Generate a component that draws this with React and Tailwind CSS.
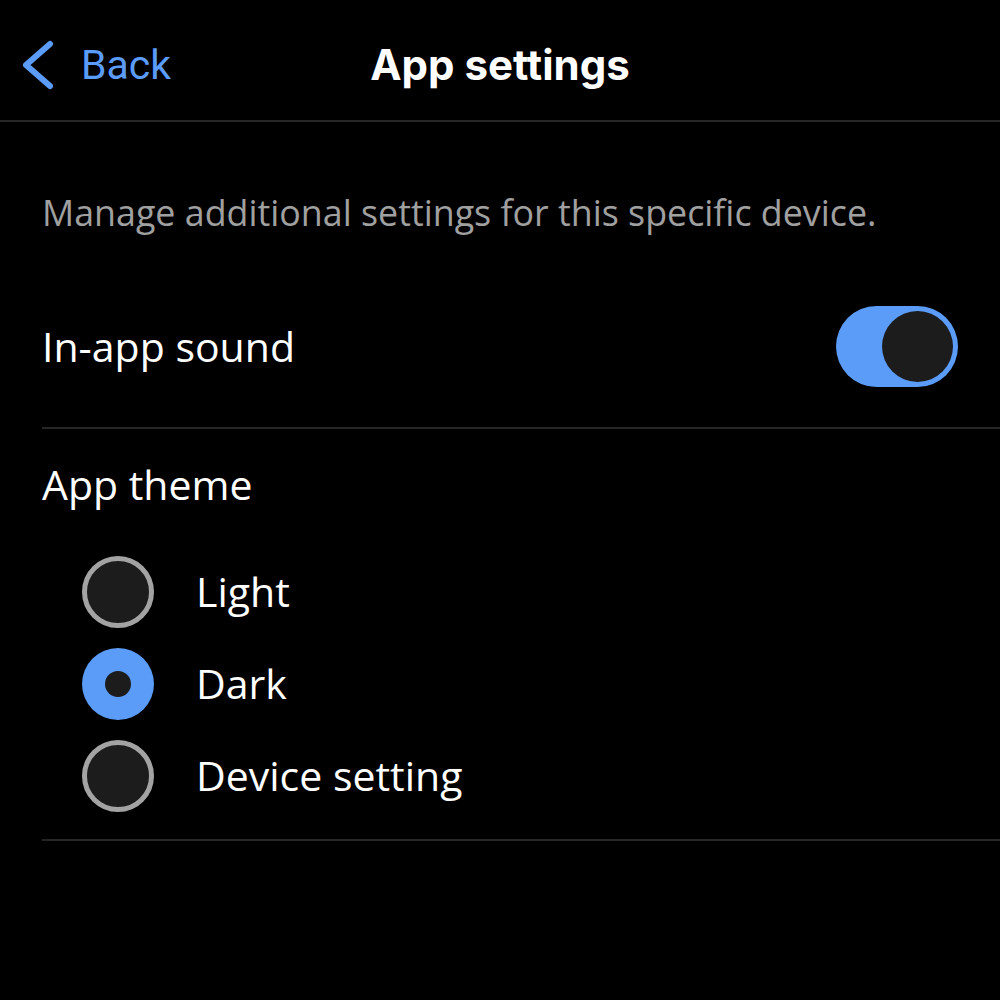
import React, {useState} from 'react';

const themes = ['Light', 'Dark', 'Device setting'];

const Radio = ({checked}) => (
    checked ? (
        <span className="w-[72px] h-[72px] shrink-0 rounded-full bg-[#5b9cf8] flex items-center justify-center">
            <span className="w-[26px] h-[26px] rounded-full bg-[#1c1c1c]"/>
        </span>
    ) : (
        <span className="w-[72px] h-[72px] shrink-0 rounded-full bg-[#1c1c1c] border-[5px] border-[#a3a3a3]"/>
    )
);

export default function App() {
    const [sound, setSound] = useState(true);
    const [theme, setTheme] = useState('Dark');

    return (
        <div className="w-[1000px] h-[1000px] bg-black text-white overflow-hidden font-['Open_Sans',sans-serif]">
            <header className="h-[122px] pt-[10px] border-b-2 border-[#262626] relative flex items-center">
                <button className="flex items-center gap-[27px] pl-[20px] text-[#5b9cf8] font-['Roboto',sans-serif]">
                    <svg width="34" height="50" viewBox="0 0 34 50" fill="none">
                        <path d="M30 4L6 25L30 46" stroke="#5b9cf8" strokeWidth="6" strokeLinecap="round" strokeLinejoin="round"/>
                    </svg>
                    <span className="text-[41px] leading-none">Back</span>
                </button>
                <h1 className="absolute left-0 right-0 text-center text-[42px] font-bold leading-none pointer-events-none font-['Inter',sans-serif]">
                    App settings
                </h1>
            </header>

            <main className="pl-[42px]">
                <p className="pt-[73px] text-[35.8px] text-[#a0a0a0] leading-none">
                    Manage additional settings for this specific device.
                </p>

                <div className="flex items-center justify-between h-[163px] mt-[35px] pr-[42px] border-b-2 border-[#262626]">
                    <span className="text-[41px] leading-none">In-app sound</span>
                    <button
                        onClick={() => setSound(!sound)}
                        className={`w-[122px] h-[81px] rounded-full flex items-center px-[5px] ${sound ? 'bg-[#5b9cf8] justify-end' : 'bg-[#3a3a3a] justify-start'}`}
                    >
                        <span className="w-[71px] h-[71px] rounded-full bg-[#1c1c1c]"/>
                    </button>
                </div>

                <div className="border-b-2 border-[#262626] pb-[27px]">
                    <div className="pt-[35px] text-[41px] leading-none">App theme</div>
                    <div className="flex flex-col gap-[20px] pt-[51px] pl-[40px]">
                        {themes.map((t) => (
                            <button key={t} onClick={() => setTheme(t)} className="flex items-center gap-[42px] text-left">
                                <Radio checked={theme === t}/>
                                <span className="text-[41px] leading-none">{t}</span>
                            </button>
                        ))}
                    </div>
                </div>
            </main>
        </div>
    );
}
